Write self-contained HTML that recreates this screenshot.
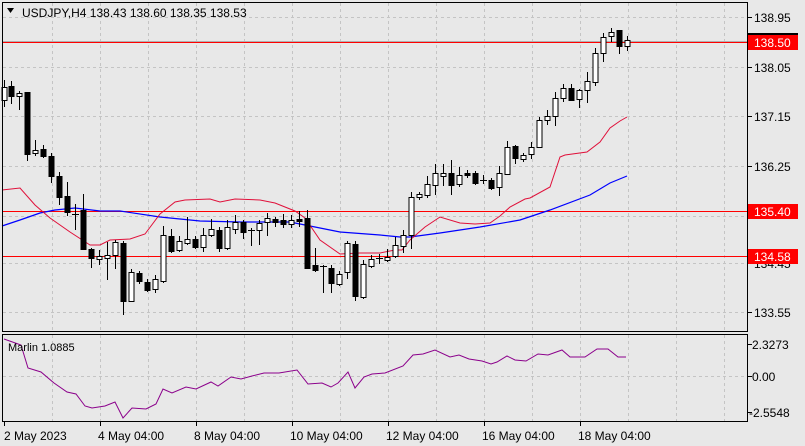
<!DOCTYPE html>
<html><head><meta charset="utf-8"><style>
html,body{margin:0;padding:0;background:#e8e8e8;}
svg{display:block;font-family:"Liberation Sans",sans-serif;}
</style></head><body>
<svg width="805" height="446" viewBox="0 0 805 446" xmlns="http://www.w3.org/2000/svg">
<rect width="805" height="446" fill="#e8e8e8"/>
<g stroke="#c4c4c4" stroke-dasharray="3,3" stroke-width="1">
<path d="M52.5 3V331M100.5 3V331M148.5 3V331M196.5 3V331M244.5 3V331M292.5 3V331M340.5 3V331M388.5 3V331M436.5 3V331M484.5 3V331M532.5 3V331M580.5 3V331M628.5 3V331M676.5 3V331M724.5 3V331"/>
<path d="M52.5 335V421M100.5 335V421M148.5 335V421M196.5 335V421M244.5 335V421M292.5 335V421M340.5 335V421M388.5 335V421M436.5 335V421M484.5 335V421M532.5 335V421M580.5 335V421M628.5 335V421M676.5 335V421M724.5 335V421"/>
<path d="M3 17.5H747M3 67.5H747M3 116.5H747M3 166.5H747M3 216.5H747M3 263.5H747M3 312.5H747M3 376.5H747"/>
</g>
<line x1="3" y1="41.5" x2="747" y2="41.5" stroke="#b0b0b0"/>
<g stroke="#ff0000" stroke-width="1">
<line x1="3" y1="42.5" x2="747" y2="42.5"/>
<line x1="3" y1="211.5" x2="747" y2="211.5"/>
<line x1="3" y1="256.5" x2="747" y2="256.5"/>
</g>
<polyline fill="none" stroke="#0000ff" stroke-width="1.2" points="2,226 20,220 40,213 55,210 75,208 100,211 120,211 160,217 200,221 240,222 270,222 290,222 310,226 340,232 380,235 400,237 410,237 440,233 480,227 520,220 550,210 590,195 610,183 627,176"/>
<polyline fill="none" stroke="#e0103a" stroke-width="1" points="2,190 20,188 35,205 50,218 70,232 90,245 100,245 110,240 130,239 145,234 160,214 175,202 185,200 210,199 220,202 235,199 260,200 275,203 295,211 305,218 320,240 340,254 360,253 380,253 395,250 402,250 410,240 425,227 440,217 460,223 475,224 490,223 500,216 510,207 525,199 530,198 550,187 560,157 565,155 587,152 600,142 610,128 620,121 627,117"/>
<g stroke="#000" stroke-width="1">
<path d="M4.5 80V107M11.5 81V104M19.5 91V110M27.5 92V161M35.5 140V156M43.5 145V158M51.5 153V183M59.5 172V205M67.5 182V216M75.5 204V230M83.5 194V249M91.5 248V268M99.5 250V265M107.5 242V280M115.5 240V269M123.5 241V315M131.5 269V302M139.5 271V284M147.5 279V292M155.5 275V293M163.5 226V283M171.5 229V253M179.5 236V252M187.5 217V245M195.5 236V249M203.5 228V252M211.5 219V237M219.5 227V252M227.5 220V250M235.5 215V234M243.5 220V239M251.5 228V246M259.5 220V245M267.5 213V236M275.5 217V227M283.5 214V228M291.5 215V228M299.5 211V227M307.5 210V269M315.5 248V272M323.5 265V293M331.5 265V293M339.5 271V286M347.5 241V279M355.5 241V301M363.5 260V299M371.5 255V268M379.5 254V264M387.5 249V262M395.5 237V258M403.5 230V253M411.5 192V249M419.5 192V200M427.5 176V198M435.5 164V195M443.5 164V186M451.5 160V195M459.5 167V187M467.5 170V178M475.5 171V185M483.5 175V184M491.5 178V190M499.5 166V196M507.5 141V175M515.5 145V164M523.5 153V162M531.5 142V159M539.5 117V147M547.5 110V125M555.5 92V126M563.5 84V102M571.5 84V100M579.5 89V108M587.5 72V103M595.5 48V86M603.5 33V62M611.5 28V42M619.5 30V54M627.5 36V51"/>
<path d="M72 214.5H79M248 230.5H255M320 266.5H327M376 258.5H383M480 180.5H487"/>
<g fill="#fff">
<rect x="2" y="87.5" width="5" height="13"/><rect x="17" y="93.5" width="5" height="3"/><rect x="33" y="150.5" width="5" height="3"/><rect x="97" y="256.5" width="5" height="3"/><rect x="105" y="255.5" width="5" height="3"/><rect x="113" y="242.5" width="5" height="13"/><rect x="129" y="272.5" width="5" height="29"/><rect x="153" y="279.5" width="5" height="10"/><rect x="161" y="235.5" width="5" height="46"/><rect x="177" y="241.5" width="5" height="9"/><rect x="185" y="239.5" width="5" height="4"/><rect x="201" y="235.5" width="5" height="12"/><rect x="209" y="229.5" width="5" height="6"/><rect x="225" y="227.5" width="5" height="21"/><rect x="233" y="222.5" width="5" height="7"/><rect x="257" y="223.5" width="5" height="7"/><rect x="265" y="218.5" width="5" height="4"/><rect x="289" y="220.5" width="5" height="4"/><rect x="337" y="274.5" width="5" height="10"/><rect x="345" y="243.5" width="5" height="29"/><rect x="361" y="264.5" width="5" height="33"/><rect x="369" y="259.5" width="5" height="7"/><rect x="385" y="257.5" width="5" height="3"/><rect x="393" y="245.5" width="5" height="11"/><rect x="401" y="235.5" width="5" height="11"/><rect x="409" y="197.5" width="5" height="38"/><rect x="417" y="194.5" width="5" height="3"/><rect x="425" y="184.5" width="5" height="11"/><rect x="433" y="173.5" width="5" height="12"/><rect x="441" y="173.5" width="5" height="3"/><rect x="457" y="175.5" width="5" height="9"/><rect x="497" y="173.5" width="5" height="14"/><rect x="505" y="147.5" width="5" height="27"/><rect x="521" y="155.5" width="5" height="4"/><rect x="529" y="147.5" width="5" height="7"/><rect x="537" y="120.5" width="5" height="27"/><rect x="545" y="116.5" width="5" height="4"/><rect x="553" y="98.5" width="5" height="18"/><rect x="561" y="88.5" width="5" height="10"/><rect x="577" y="90.5" width="5" height="9"/><rect x="585" y="81.5" width="5" height="9"/><rect x="593" y="53.5" width="5" height="29"/><rect x="601" y="37.5" width="5" height="16"/><rect x="609" y="32.5" width="5" height="4"/><rect x="625" y="40.5" width="5" height="6"/>
</g>
<g fill="#000">
<rect x="9" y="86.5" width="5" height="10"/><rect x="25" y="92.5" width="5" height="62"/><rect x="41" y="149.5" width="5" height="7"/><rect x="49" y="156.5" width="5" height="20"/><rect x="57" y="176.5" width="5" height="21"/><rect x="65" y="196.5" width="5" height="16"/><rect x="81" y="210.5" width="5" height="39"/><rect x="89" y="249.5" width="5" height="9"/><rect x="121" y="243.5" width="5" height="58"/><rect x="137" y="273.5" width="5" height="8"/><rect x="145" y="282.5" width="5" height="8"/><rect x="169" y="236.5" width="5" height="15"/><rect x="193" y="239.5" width="5" height="8"/><rect x="217" y="230.5" width="5" height="18"/><rect x="241" y="222.5" width="5" height="10"/><rect x="273" y="219.5" width="5" height="3"/><rect x="281" y="220.5" width="5" height="4"/><rect x="297" y="219.5" width="5" height="2"/><rect x="305" y="218.5" width="5" height="50"/><rect x="313" y="265.5" width="5" height="5"/><rect x="329" y="268.5" width="5" height="15"/><rect x="353" y="244.5" width="5" height="52"/><rect x="449" y="173.5" width="5" height="12"/><rect x="465" y="173.5" width="5" height="2"/><rect x="473" y="173.5" width="5" height="10"/><rect x="489" y="180.5" width="5" height="8"/><rect x="513" y="146.5" width="5" height="12"/><rect x="569" y="88.5" width="5" height="12"/><rect x="617" y="30.5" width="5" height="16"/>
</g>
</g>
<rect x="2.5" y="2.5" width="745" height="329" fill="none" stroke="#000"/>
<rect x="2.5" y="334.5" width="745" height="87" fill="none" stroke="#000"/>
<polyline fill="none" stroke="#8b008b" stroke-width="1" points="4,339 21,345 28,368 41,372 54,383 67,392 76,394 85,406 92,408 105,406 115,402 123,418 132,408 146,409 156,404 163,389 172,393 186,387 196,389 211,382 218,386 231,377 241,379 252,376 264,373 279,373 297,370 308,384 322,383 331,387 338,383 348,372 355,388 364,377 372,374 385,373 403,366 413,355 423,354 435,350 450,357 459,355 469,359 482,361 491,364 497,362 507,356 515,360 526,361 538,354 548,355 562,350 570,357 585,357 597,349 608,349 618,357 626,357"/>
<path d="M7 8L14 8L10.5 13Z" fill="#000"/>
<text x="22" y="17" font-size="12" fill="#000">USDJPY,H4  138.43 138.60 138.35 138.53</text>
<text x="8" y="351" font-size="11" fill="#000">Marlin 1.0885</text>
<g font-size="12" fill="#000">
<text x="754" y="22">138.95</text>
<text x="754" y="72">138.05</text>
<text x="754" y="121">137.15</text>
<text x="754" y="171">136.25</text>
<text x="754" y="268">134.45</text>
<text x="754" y="317">133.55</text>
<text x="752" y="349">2.3273</text>
<text x="752" y="381">0.00</text>
<text x="749" y="417">-2.5548</text>
</g>
<g stroke="#000"><path d="M748 17.5H752M748 67.5H752M748 116.5H752M748 166.5H752M748 263.5H752M748 312.5H752M748 344.5H752M748 376.5H752M748 412.5H752"/></g>
<rect x="748" y="33" width="50" height="2" fill="#000"/>
<rect x="748" y="35" width="50" height="15" fill="#ff0000"/>
<rect x="748" y="204" width="50" height="15" fill="#ff0000"/>
<rect x="748" y="249" width="50" height="15" fill="#ff0000"/>
<g font-size="12" fill="#fff">
<text x="754" y="47">138.50</text>
<text x="754" y="216">135.40</text>
<text x="754" y="261">134.58</text>
</g>
<g stroke="#000"><path d="M4.5 422V426M100.5 422V426M196.5 422V426M292.5 422V426M388.5 422V426M484.5 422V426M580.5 422V426"/></g>
<g font-size="12" fill="#000">
<text x="4" y="440">2 May 2023</text>
<text x="98" y="440">4 May 04:00</text>
<text x="194" y="440">8 May 04:00</text>
<text x="290" y="440">10 May 04:00</text>
<text x="386" y="440">12 May 04:00</text>
<text x="482" y="440">16 May 04:00</text>
<text x="578" y="440">18 May 04:00</text>
</g>
</svg>
</body></html>
